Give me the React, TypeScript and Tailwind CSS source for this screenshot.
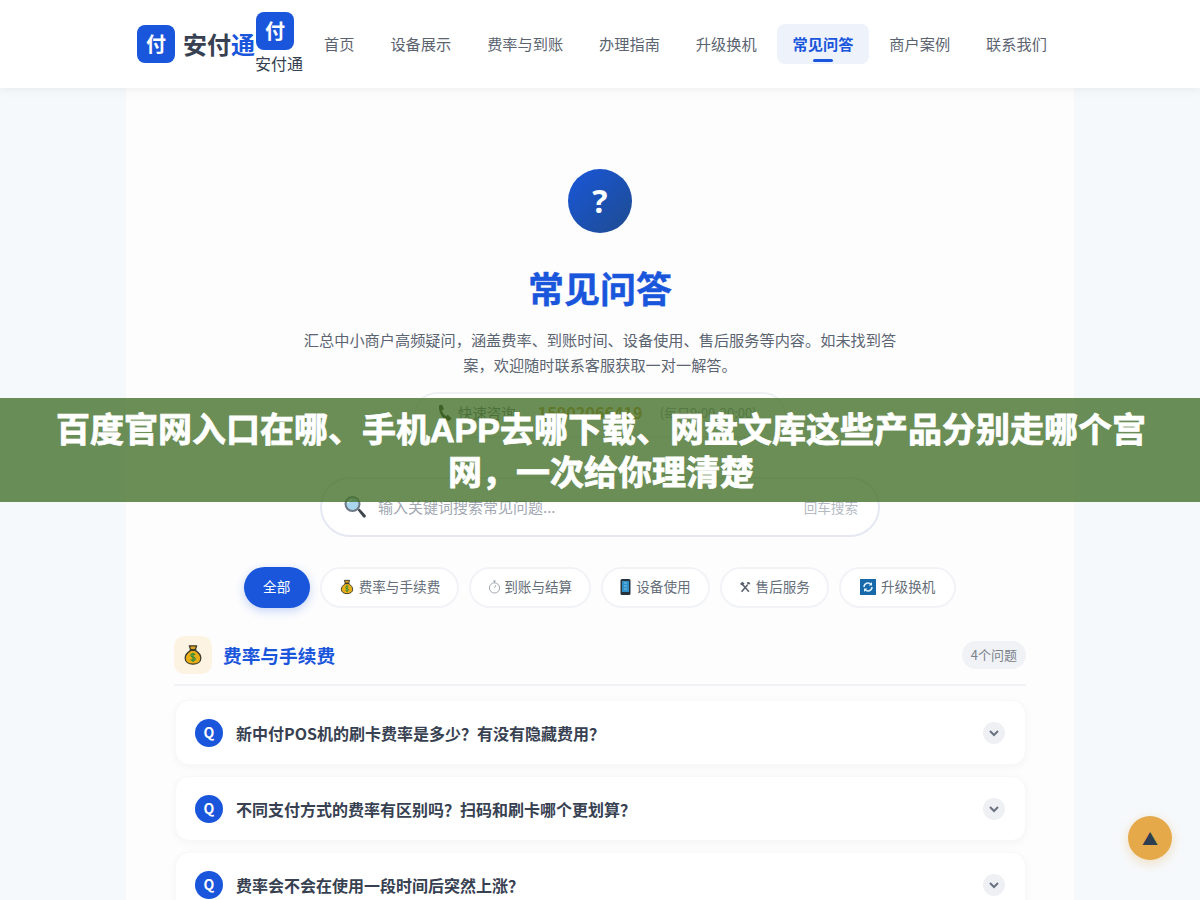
const NAV = ['首页', '设备展示', '费率与到账', '办理指南', '升级换机', '常见问答', '商户案例', '联系我们']

function MoneyBag({ size = 16 }: { size?: number }) {
  return (
    <svg width={size} height={size} viewBox="0 0 24 24" className="shrink-0">
      <path d="M8 2h8l-1.600 4.500h-4.800z" fill="#e0a526" stroke="#3a3a2a" strokeWidth="1.400" strokeLinejoin="round" />
      <path d="M9.500 7C5.500 9.500 3.500 12.500 3.500 15.500c0 4 3.500 6.500 8.500 6.500s8.500-2.500 8.500-6.500c0-3-2-6-6-8.500z" fill="#e9ae16" stroke="#3a3a2a" strokeWidth="1.400" />
      <path d="M9 6.500h6" stroke="#3a3a2a" strokeWidth="1.600" strokeLinecap="round" />
      <path d="M14.300 12c-.5-.9-1.300-1.200-2.300-1.200-1.300 0-2.300.7-2.300 1.800 0 2.400 4.700 1.100 4.700 3.500 0 1.100-1 1.800-2.400 1.800-1.100 0-2-.4-2.500-1.300M12 9.500v10" fill="none" stroke="#2e8b3d" strokeWidth="1.300" />
    </svg>
  )
}

function Timer() {
  return (
    <svg width="13" height="14" viewBox="0 0 14 15" fill="none" stroke="#9aa1ab" strokeWidth="1" className="shrink-0">
      <circle cx="7" cy="8.500" r="5.500" />
      <path d="M5.500 1h3M7 1v2M7 8.500l1.500-3" />
    </svg>
  )
}

function Phone() {
  return (
    <svg width="11" height="16" viewBox="0 0 11 16" className="shrink-0">
      <rect x="0.500" y="0" width="10" height="16" rx="1.500" fill="#26323c" />
      <rect x="2" y="2" width="7" height="11" fill="#2f8fc9" />
      <path d="M4 4h3M4 7h3M4 10h3" stroke="#7cc4ea" strokeWidth="1" />
    </svg>
  )
}

function Tools() {
  return (
    <svg width="12" height="12" viewBox="0 0 14 14" className="shrink-0">
      <path d="M3 12.500L10 4.500" stroke="#59616c" strokeWidth="1.800" />
      <path d="M11.500 12.500L4.500 4.500" stroke="#59616c" strokeWidth="1.800" />
      <path d="M1 3.500l3-2.500 2.500 2L4 5.500z" fill="#59616c" />
      <path d="M9.200 1.500a2.500 2.500 0 0 1 3.800 2.700l-1.700-.8-1 1.200z" fill="#59616c" />
    </svg>
  )
}

function Cycle() {
  return (
    <svg width="16" height="16" viewBox="0 0 16 16" className="shrink-0">
      <rect width="16" height="16" fill="#1769aa" />
      <path d="M4 8a4 4 0 0 1 7-2.600M12 8a4 4 0 0 1-7 2.600" fill="none" stroke="#dff1fb" strokeWidth="1.500" />
      <path d="M12 3v3.500H8.700zM4 13V9.500h3.300z" fill="#dff1fb" />
    </svg>
  )
}

function Magnifier() {
  return (
    <svg width="24" height="24" viewBox="0 0 24 24" className="shrink-0">
      <path d="M14.500 15l2-1.500 6 6.500a1.500 1.500 0 0 1-2.500 2z" fill="#3f4650" />
      <circle cx="9.500" cy="9" r="7" fill="#a9d6ee" stroke="#6d7a85" strokeWidth="2" />
      <path d="M5 8a4.500 4.500 0 0 1 4-3.500" fill="none" stroke="#e8f6fd" strokeWidth="1.500" />
    </svg>
  )
}

function Handset() {
  return (
    <svg width="16" height="18" viewBox="0 0 16 18" className="shrink-0">
      <path d="M2 1.500l3-1 2 4.500-2 1.500c.6 2.400 2 4.300 4 5.500l2-1.200 3.500 3.700-2.500 2.500C6 16 1.500 9 2 1.500z" fill="#1f1f10" />
    </svg>
  )
}

function LogoMark() {
  return (
    <div className="w-[38px] h-[38px] shrink-0 rounded-lg bg-[#1a56db] flex items-center justify-center text-white font-bold text-[20px]">付</div>
  )
}

function Chip({ children, className }: { children: React.ReactNode; className: string }) {
  return (
    <div className={`h-[41px] pb-[2px] rounded-full bg-white border-2 border-[#f1f3f7] flex items-center text-[13.6px] text-[#666e7a] ${className}`}>
      {children}
    </div>
  )
}

function FaqCard({ text }: { text: string }) {
  return (
    <div className="h-[65px] shrink-0 rounded-[14px] bg-white border border-[#f7f8fa] shadow-[0_2px_8px_rgba(0,0,0,0.04)] pl-[19px] pr-5 flex items-center">
      <div className="w-7 h-7 rounded-full bg-[#1a56db] text-white text-[14px] font-bold flex items-center justify-center">Q</div>
      <div className="ml-[13px] flex-1 text-[16px] font-semibold text-[#374151]">{text}</div>
      <div className="w-[22px] h-[22px] rounded-full bg-[#eef0f4] flex items-center justify-center">
        <svg width="12" height="12" viewBox="0 0 12 12" fill="none" stroke="#6b7280" strokeWidth="2">
          <path d="M2 4l4 4 4-4" />
        </svg>
      </div>
    </div>
  )
}

export default function App() {
  return (
    <div className="relative h-[900px] overflow-hidden bg-[#f6f9fc] font-['Noto_Sans_CJK_SC','Noto_Sans',sans-serif]">
      {/* 顶部导航 */}
      <header className="relative z-10 h-[88px] bg-white shadow-[0_2px_10px_rgba(0,0,0,0.06)] pl-[137px] flex items-center">
        <LogoMark />
        <span className="ml-2 text-[24px] font-bold text-[#374151] leading-none whitespace-nowrap w-[73px]">
          安付<span className="text-[#1a56db]">通</span>
        </span>
        <div className="w-[50px] flex flex-col items-start -mt-[1px]">
          <LogoMark />
          <span className="text-[16px] leading-[24px] mt-[1px] text-[#374151] whitespace-nowrap -ml-px">安付通</span>
        </div>
        <nav className="ml-[2px] flex items-center gap-1">
          {NAV.map(n =>
            n === '常见问答' ? (
              <div key={n} className="relative h-10 px-4 pb-[2px] rounded-lg bg-[#edf2fb] flex items-center text-[15.2px] font-bold text-[#1a56db] whitespace-nowrap">
                {n}
                <div className="absolute left-1/2 -translate-x-1/2 bottom-[2px] w-5 h-[3px] rounded-sm bg-[#1a56db]" />
              </div>
            ) : (
              <div key={n} className="h-10 px-4 pb-[2px] flex items-center text-[15.2px] text-[#5b6370] whitespace-nowrap">{n}</div>
            )
          )}
        </nav>
      </header>

      <main className="mx-auto w-[948px] h-[812px] bg-[#fdfdfe] px-12 pt-[81px] flex flex-col overflow-hidden">
        {/* 标题区 */}
        <div className="flex flex-col items-center">
          <div className="w-16 h-16 rounded-full bg-gradient-to-br from-[#1a56db] to-[#1e4b8f] flex items-center justify-center text-white text-[32px] font-bold font-['Open_Sans',sans-serif]">?</div>
          <h1 className="mt-[24px] text-[36px] leading-[60px] font-bold text-[#1a56db] [-webkit-text-stroke:0.4px_#1a56db]">常见问答</h1>
          <p className="mt-[10px] w-[600px] text-center text-[15.2px] leading-[25px] text-[#5b6470]">
            汇总中小商户高频疑问，涵盖费率、到账时间、设备使用、售后服务等内容。如未找到答案，欢迎随时联系客服获取一对一解答。
          </p>
          <div className="mt-[15px] h-[46px] w-[372px] pb-[5px] pl-[21px] rounded-full bg-white border-2 border-[#eef0f4] flex items-center text-[14.4px] text-[#5b6470] whitespace-nowrap">
            <Handset />
            <span className="ml-[5px]">快速咨询</span>
            <span className="ml-[22px] font-bold text-[#c9931f] text-[16.2px]">15902066419</span>
            <span className="ml-[17px] text-[13px] text-[#8a919c]">(每日9:00-20:00)</span>
          </div>
        </div>

        {/* 搜索框 */}
        <div className="mt-[39px] mx-auto w-[560px] h-[60px] shrink-0 rounded-full bg-white border-2 border-[#e5e8f2] pl-[21px] pr-5 flex items-center">
          <Magnifier />
          <span className="ml-[11px] flex-1 text-[15px] text-[#a2a8b2]">输入关键词搜索常见问题...</span>
          <span className="text-[13.6px] text-[#b4bac3]">回车搜索</span>
        </div>

        {/* 分类筛选 */}
        <div className="mt-[30px] flex justify-center gap-[10px]">
          <div className="h-[41px] w-[66px] pb-[2px] rounded-full bg-[#1a56db] shadow-[0_3px_10px_rgba(26,86,219,0.25)] flex items-center justify-center text-[13.6px] text-white">全部</div>
          <Chip className="px-[17px] gap-1"><MoneyBag />费率与手续费</Chip>
          <Chip className="px-[17px] gap-[3px]"><Timer />到账与结算</Chip>
          <Chip className="px-[17px] gap-[5px]"><Phone />设备使用</Chip>
          <Chip className="px-[17px] gap-[5px]"><Tools />售后服务</Chip>
          <Chip className="px-[19px] gap-[5px]"><Cycle />升级换机</Chip>
        </div>

        {/* 费率与手续费 */}
        <div className="mt-7 h-[50px] shrink-0 border-b-2 border-[#f0f2f5] flex items-start">
          <div className="w-[38px] h-[38px] rounded-[10px] bg-[#fdf3e3] flex items-center justify-center"><MoneyBag size={22} /></div>
          <h3 className="ml-[11px] text-[18.7px] leading-[38px] font-bold text-[#1a56db]">费率与手续费</h3>
          <div className="ml-auto mt-[5px] h-7 px-[9px] rounded-full bg-[#f0f2f5] flex items-center text-[13px] text-[#7b828d]">4个问题</div>
        </div>
        <div className="mt-[14px] pl-px flex flex-col gap-[11px]">
          <FaqCard text="新中付POS机的刷卡费率是多少？有没有隐藏费用？" />
          <FaqCard text="不同支付方式的费率有区别吗？扫码和刷卡哪个更划算？" />
          <FaqCard text="费率会不会在使用一段时间后突然上涨？" />
        </div>
      </main>

      {/* 返回顶部 */}
      <div className="absolute right-[28px] bottom-[40px] w-11 h-11 rounded-full bg-[#e6a94a] shadow-[0_3px_12px_rgba(230,169,74,0.35)] flex items-center justify-center text-[16px] text-[#2c3e50]">▲</div>

      {/* 标题横幅 */}
      <div className="absolute left-0 right-0 top-[398px] h-[104px] z-20 bg-[#46722c]/80 pt-[4px] pl-[50px] pr-12 flex items-center justify-center text-center font-['Liberation_Sans','Noto_Sans_CJK_SC',sans-serif] text-[34px] leading-[43px] font-bold text-white [-webkit-text-stroke:0.8px_white]">
        百度官网入口在哪、手机APP去哪下载、网盘文库这些产品分别走哪个宫网，一次给你理清楚
      </div>
    </div>
  )
}
